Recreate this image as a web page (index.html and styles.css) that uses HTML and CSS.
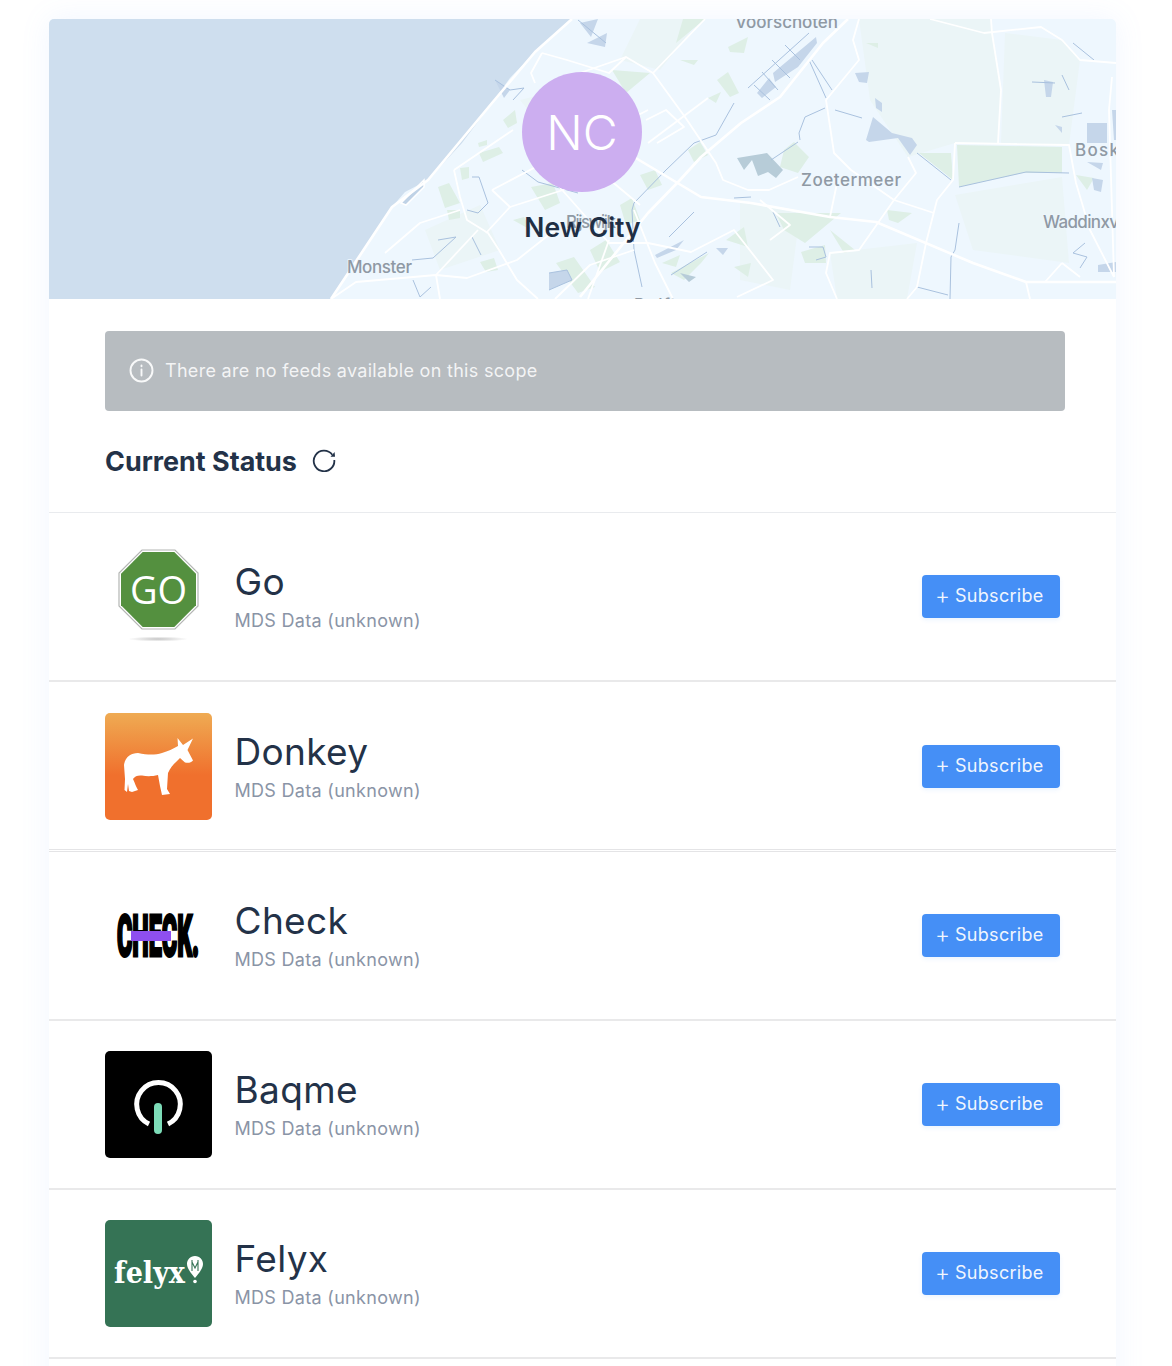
FILE: index.html
```html
<!DOCTYPE html>
<html lang="en">
<head>
<meta charset="utf-8">
<title>New City</title>
<link rel="stylesheet" href="styles.css">
</head>
<body>
<main class="card">
  <header class="hero">
    <svg class="map" viewBox="49 19 1067 280" preserveAspectRatio="none" aria-hidden="true">
      <rect class="m-land" x="49" y="19" width="1067" height="280"/>
      <path class="m-sea" d="M49 19H572L535 52L510 78L492 103L462 143L428 180L405 192L392 207L363 250L331 299H49Z"/>
      <g class="m-art">
        <path class="m-pale" d="M859 19H991L1001 90L998 143L955 143L908 157L870 100ZM1005 33L1062 40L1080 60L1069 145L1001 143ZM955 195L1062 177L1069 263L973 250ZM830 253L917 243L907 299H837ZM640 19H700L660 70L620 60ZM740 200L800 213L790 290L740 280ZM425 230L480 205L500 250L440 270ZM520 100L600 80L630 130L560 150Z"/>
        <path class="m-green" d="M612 70L650 73L626 93ZM676 43L705 19L683 19ZM728 47L748 37L744 53L730 52ZM717 80L728 72L739 93L730 97ZM680 60L698 60L694 65ZM708 98L721 92L716 103ZM784 150L794 142L809 157L798 173L780 167ZM776 213L841 213L805 243L784 230ZM830 230L855 250L844 253ZM801 252L825 245L826 263L805 263ZM887 210L912 213L898 223L889 220ZM919 153L951 153L953 180ZM957 145L1062 147L1062 173L1023 173L959 187ZM1076 175L1094 178L1087 190ZM662 263L680 255L676 267ZM671 273L709 253L701 263L684 280ZM726 240L744 227L748 247ZM734 267L751 263L748 277ZM866 43L878 43L878 48ZM503 120L515 110L517 123L508 128ZM479 153L499 147L503 153L483 162ZM460 168L469 167L469 178L462 180ZM438 187L449 183L460 203L445 208ZM531 187L553 183L560 203L545 210ZM556 263L574 257L595 287L578 293ZM513 220L524 217L531 230ZM447 210L460 210L460 218L449 220ZM478 143L487 140L487 145L479 147ZM640 175L655 170L662 185L648 190ZM620 205L632 198L640 220L626 225ZM590 250L606 240L620 262L600 272ZM480 262L494 258L498 270L486 272ZM688 150L700 142L708 155L694 162Z"/>
        <path class="m-water" d="M773 73L816 37L817 43L798 67L775 82ZM757 93L769 78L776 87L762 98ZM866 140L873 117L892 133L912 138L917 145L910 155L898 138L869 142ZM875 98L882 103L882 112L876 108ZM855 73L869 72L867 83L859 82ZM1087 123L1107 123L1107 143L1087 143ZM1087 162L1103 163L1101 170ZM1092 178L1103 180L1101 192L1094 190ZM1044 80L1053 82L1051 97L1046 97ZM1055 125L1062 127L1062 133ZM1112 110L1116 110L1116 140L1114 140ZM655 255L684 240L676 250L657 258ZM716 248L728 248L723 255ZM580 23L598 19L591 37ZM587 43L607 33L605 47ZM495 80L510 90L504 98ZM549 273L567 270L572 280L549 290ZM1098 265L1116 262V272H1098Z"/>
        <path class="m-dark" d="M737 158L744 170L752 160L758 176L768 172L776 178L783 170L767 153ZM680 273L696 277L689 282Z"/>
        <path class="m-inlet" d="M401 203L424 180L424 187L406 205Z"/>
        <g class="m-creek">
          <path d="M798 142L771 160M825 108L805 117L799 133L800 140M835 110L862 118M809 60L826 98M812 60L832 90M748 88L809 33M716 135L694 143L666 170L634 203L632 210L634 250L642 287M734 103L716 135M917 153L951 180M959 187L1026 172L1069 173M959 223L955 250L951 257L950 299M871 270L872 288M917 287L948 295M773 212L780 227M734 198L751 197M1032 82L1055 83M1062 75L1069 90M1062 117L1082 113M1073 43L1094 60M1085 243L1073 253L1087 257L1080 268M809 247L823 247L826 257L816 260M694 212L669 237M707 252L671 275M495 80L510 90L524 88L513 100M578 20L606 43M522 170L538 182L578 193M472 177L479 177L488 203L478 213L467 210M412 260L433 258L456 237L438 240M472 237L481 255M413 280L420 297L431 287M549 273L567 270L572 280L549 290M754 85L770 100M762 72L778 90M772 60L790 78M785 45L800 60"/>
        </g>
        <g class="m-road m-road-major">
          <path d="M331 299L392 207L428 180L492 103L535 52L572 19"/>
          <path d="M634 157L701 197L751 203L830 217L876 222L973 263L1026 282L1116 282"/>
          <path d="M580 297L648 213L680 180L701 157L741 123L780 97L823 43L848 19"/>
        </g>
        <g class="m-road">
          <path d="M705 19L653 73L685 117L716 163L723 180L748 190L769 190L798 177"/>
          <path d="M859 19L853 40L859 60L826 100L834 153L851 170L894 200L934 213"/>
          <path d="M955 143L1069 145L1076 183L1090 230L1114 277"/>
          <path d="M955 143L953 180L937 200L926 243L917 287L907 299"/>
          <path d="M991 19L992 33L1001 90L998 143"/>
          <path d="M930 19L984 33L1041 27L1062 40L1080 60L1116 63"/>
          <path d="M908 157L916 173L894 200L859 250L830 253L826 273L837 299"/>
          <path d="M837 183L830 217"/>
          <path d="M648 243L691 252L734 230L773 280L737 297"/>
          <path d="M580 73L626 57L653 73"/>
          <path d="M708 98L648 143"/>
          <path d="M646 120L666 110L684 127L657 143"/>
          <path d="M1026 282L1030 299M1062 263L1080 277"/>
          <path d="M634 210L655 263L673 299"/>
          <path d="M1112 77L1109 110L1114 277"/>
          <path d="M542 53L567 60L609 73L626 57"/>
          <path d="M542 53L531 73L535 83"/>
          <path d="M454 170L513 130"/>
          <path d="M454 170L460 197L467 220L488 233L499 250L517 280L538 299"/>
          <path d="M492 190L549 160L580 145L648 110"/>
          <path d="M492 190L510 207L486 233"/>
          <path d="M510 207L563 190L620 155"/>
          <path d="M331 299L356 282L436 275L467 278L517 260L555 230"/>
          <path d="M385 253L420 223L460 210"/>
          <path d="M436 275L478 230M436 275L440 299"/>
          <path d="M556 183L609 243L648 243"/>
          <path d="M609 240L588 299"/>
          <path d="M634 157L610 180L640 205"/>
          <path d="M555 299L590 265L634 250"/>
          <path d="M1062 263L1045 282"/>
          <path d="M770 240L790 225L760 200"/>
        </g>
      </g>
      <g class="m-label">
        <text x="735" y="28" textLength="103">Voorschoten</text>
        <text x="801" y="186" textLength="100">Zoetermeer</text>
        <text x="347" y="273" textLength="65">Monster</text>
        <text x="1043" y="228" textLength="76">Waddinxv</text>
        <text x="1075" y="156" textLength="44">Bosk</text>
        <text x="566" y="228" textLength="50">Rijswijk</text>
        <text x="634" y="311" textLength="42">Delft</text>
        <text x="1066" y="19" textLength="46">Leiden</text>
      </g>
    </svg>
    <div class="avatar">NC</div>
    <h1 class="city">New City</h1>
  </header>

  <section class="intro">
    <div class="notice">
      <svg class="notice-icon" viewBox="0 0 25 25" aria-hidden="true">
        <circle cx="12.5" cy="12.5" r="11"/>
        <path d="M12.5 11.5v6M12.5 7.500v.8"/>
      </svg>
      <span>There are no feeds available on this scope</span>
    </div>
    <div class="status-head">
      <h2>Current Status</h2>
      <svg class="refresh" viewBox="0 0 24 24" aria-hidden="true">
        <path class="refresh-arc" d="M20.300 6.800A10.300 10.300 0 1 0 22.300 12"/>
        <path class="refresh-head" d="M18.500 8.800L23 8.800L22.600 3.900Z"/>
      </svg>
    </div>
  </section>

  <ul class="feeds">
    <li class="feed">
      <svg class="logo" viewBox="0 0 107 107" aria-hidden="true">
        <defs><radialGradient id="sh"><stop offset="0" stop-color="#c4c4c4"/><stop offset="1" stop-color="#fff"/></radialGradient></defs>
        <ellipse cx="53" cy="96" rx="30" ry="2.5" fill="url(#sh)"/>
        <path d="M37 7H70L93 30V63L70 86H37L14 63V30Z" fill="#fff" stroke="#b4b6b4" stroke-width="1.2"/>
        <path d="M37.700 9H69.300L91 30.700V62.300L69.300 84H37.700L16 62.300V30.700Z" fill="#54903f"/>
        <text class="go-text" x="53.500" y="60.500" text-anchor="middle">GO</text>
      </svg>
      <div class="feed-text"><h3>Go</h3><p>MDS Data (unknown)</p></div>
      <button class="subscribe" type="button"><span class="plus">+</span>Subscribe</button>
    </li>
    <li class="feed feed-double">
      <svg class="logo logo-square" viewBox="0 0 107 107" aria-hidden="true">
        <defs><linearGradient id="dk" x1="0" y1="0" x2="0" y2="1"><stop offset="0" stop-color="#efab53"/><stop offset=".58" stop-color="#f0702d"/><stop offset="1" stop-color="#f0702d"/></linearGradient></defs>
        <rect width="107" height="107" fill="url(#dk)"/>
        <path d="M19 52C20 44 26 40 33 40C43 42 50 42 57 40C63 38 68 36 73 33L72.500 25L78 32L88 25.500L82.500 37L88 47.500C86 50 83 50 80 49.500L75 45C71 49 66 53 63 60L62 76L65 81L57 82L55 73L53 62C47 63.500 42 63.500 37 62.500C33 62 30 63 28 66C30 70 31 74 33 77L27 79L24 78L23 71L22 79L19.500 77L20 66Z" fill="#fff"/>
      </svg>
      <div class="feed-text"><h3>Donkey</h3><p>MDS Data (unknown)</p></div>
      <button class="subscribe" type="button"><span class="plus">+</span>Subscribe</button>
    </li>
    <li class="feed">
      <svg class="logo" viewBox="0 0 107 107" aria-hidden="true">
        <text class="check-text" transform="translate(12 73.500) scale(.41 1)">CHECK.</text>
        <rect x="26" y="49" width="40" height="10" fill="#8e4fef"/>
      </svg>
      <div class="feed-text"><h3>Check</h3><p>MDS Data (unknown)</p></div>
      <button class="subscribe" type="button"><span class="plus">+</span>Subscribe</button>
    </li>
    <li class="feed">
      <svg class="logo logo-square" viewBox="0 0 107 107" aria-hidden="true">
        <rect width="107" height="107" fill="#000"/>
        <path d="M44 73A21.800 21.800 0 1 1 63 73" fill="none" stroke="#fff" stroke-width="5"/>
        <rect x="49" y="52" width="8" height="31" rx="4" fill="#7ddcb8"/>
      </svg>
      <div class="feed-text"><h3>Baqme</h3><p>MDS Data (unknown)</p></div>
      <button class="subscribe" type="button"><span class="plus">+</span>Subscribe</button>
    </li>
    <li class="feed">
      <svg class="logo logo-square" viewBox="0 0 107 107" aria-hidden="true">
        <rect width="107" height="107" fill="#357355"/>
        <text class="felyx-text" x="9" y="63" textLength="71" lengthAdjust="spacingAndGlyphs">felyx</text>
        <path d="M90 36C85 36 82 40 82 44C82 49 87 54 90 58C93 54 98 49 98 44C98 40 95 36 90 36Z" fill="#fff"/>
        <path d="M87 40v11M93 40v11M87 42l3 6 3-6" fill="none" stroke="#357355" stroke-width="1.100"/>
        <circle cx="90" cy="61.500" r="1.800" fill="#fff"/>
      </svg>
      <div class="feed-text"><h3>Felyx</h3><p>MDS Data (unknown)</p></div>
      <button class="subscribe" type="button"><span class="plus">+</span>Subscribe</button>
    </li>
  </ul>
</main>
</body>
</html>
```
FILE: styles.css
```css
* { box-sizing: border-box; }

html, body { margin: 0; padding: 0; background: #fff; }

body {
  height: 1366px;
  overflow: hidden;
  padding: 19px 56px 0 49px;
  font-family: Inter, "Liberation Sans", sans-serif;
  color: #233248;
}

.card {
  width: 1067px;
  min-height: 1400px;
  background: #fff;
  border-radius: 5px;
  box-shadow: 0 0 30px rgba(120, 170, 255, .10);
}

.hero {
  position: relative;
  height: 280px;
  border-radius: 5px 5px 0 0;
  overflow: hidden;
  display: flex;
  flex-direction: column;
  align-items: center;
  padding-top: 53px;
}

.map { position: absolute; inset: 0; width: 100%; height: 100%; }
.m-land { fill: #eef7fe; }
.m-sea { fill: #cedeee; }
.m-art { filter: blur(.5px); }
.m-pale { fill: #ebf5f7; }
.m-green { fill: #deefe6; }
.m-water { fill: #c5d6ea; }
.m-dark { fill: #b7ccd8; }
.m-inlet { fill: #bfd2e6; stroke: #fff; stroke-width: 1.500; }
.m-creek path { fill: none; stroke: #a9c1de; stroke-width: 1; }
.m-road path { fill: none; stroke: #fff; stroke-width: 1.800; stroke-linejoin: round; }
.m-road-major path { stroke-width: 2.600; }
.m-label text {
  font-size: 17px;
  font-weight: 500;
  fill: #8f99a4;
  stroke: #eef7fe;
  stroke-width: 1.500px;
  paint-order: stroke;
}

.avatar {
  position: relative;
  width: 120px;
  height: 120px;
  margin-right: 1px;
  border-radius: 50%;
  background: #ccaef0;
  color: #fff;
  display: flex;
  align-items: center;
  justify-content: center;
  font-size: 48px;
  font-weight: 300;
}

.city {
  position: relative;
  margin: 18px 0 0;
  font-size: 26.500px;
  line-height: 34px;
  font-weight: 600;
  color: #1f2f45;
}

.intro {
  padding: 32px 51px 0 56px;
  height: 214px;
  border-bottom: 1px solid #e9ebee;
}

.notice {
  height: 80px;
  border-radius: 4px;
  background: #b7bcc0;
  color: rgba(255, 255, 255, .85);
  display: flex;
  align-items: center;
  gap: 11px;
  padding: 0 0 1px 24px;
  font-size: 18px;
  letter-spacing: .3px;
}

.notice-icon {
  width: 25px;
  height: 25px;
  fill: none;
  stroke: rgba(255, 255, 255, .9);
  stroke-width: 1.900;
  stroke-linecap: round;
}

.status-head {
  display: flex;
  align-items: center;
  gap: 15px;
  margin-top: 33px;
}

.status-head h2 {
  margin: 0;
  font-size: 26.900px;
  line-height: 34px;
  font-weight: 700;
}

.refresh { width: 24px; height: 24px; position: relative; top: -1px; }
.refresh-arc { fill: none; stroke: #233248; stroke-width: 1.800; }
.refresh-head { fill: #233248; }

.feeds { list-style: none; margin: 0; padding: 0; }

.feed {
  height: 169px;
  border-bottom: 2px solid #e9e9ea;
  display: flex;
  align-items: center;
  padding: 0 56px;
}

.feed-double { height: 170px; padding-top: 1px; border-bottom: 3px double #e4e4e6; }

.logo { flex: none; width: 107px; height: 107px; }
.logo-square { border-radius: 5px; }

.go-text { font-size: 38px; fill: #fff; font-family: "Open Sans", sans-serif; font-weight: 400; }
.check-text { font-family: Roboto, "Liberation Sans", sans-serif; font-size: 57px; font-weight: 900; fill: #000; stroke: #000; stroke-width: 3px; }
.felyx-text { font-family: "DejaVu Serif", serif; font-size: 30px; font-weight: 700; fill: #fff; }

.feed-text { margin-left: 22.500px; flex: 1; }

.feed-text h3 {
  margin: 0;
  font-size: 37px;
  line-height: 44px;
  font-weight: 400;
  letter-spacing: .35px;
  color: #233248;
}

.feed-text p {
  margin: 5px 0 0;
  font-size: 18px;
  line-height: 24px;
  letter-spacing: .3px;
  color: #8a94a6;
}

.subscribe {
  width: 138px;
  height: 43px;
  border: 0;
  border-radius: 4px;
  padding: 0 0 2px 13px;
  background: #458ff6;
  color: #f1f6fe;
  display: flex;
  align-items: center;
  font: 400 18px Inter, "Liberation Sans", sans-serif;
  letter-spacing: .3px;
  box-shadow: 0 2px 4px rgba(69, 143, 246, .1);
}

.plus {
  width: 20px;
  font-size: 23px;
  font-weight: 300;
  line-height: 20px;
  letter-spacing: 0;
  text-align: left;
}
```
